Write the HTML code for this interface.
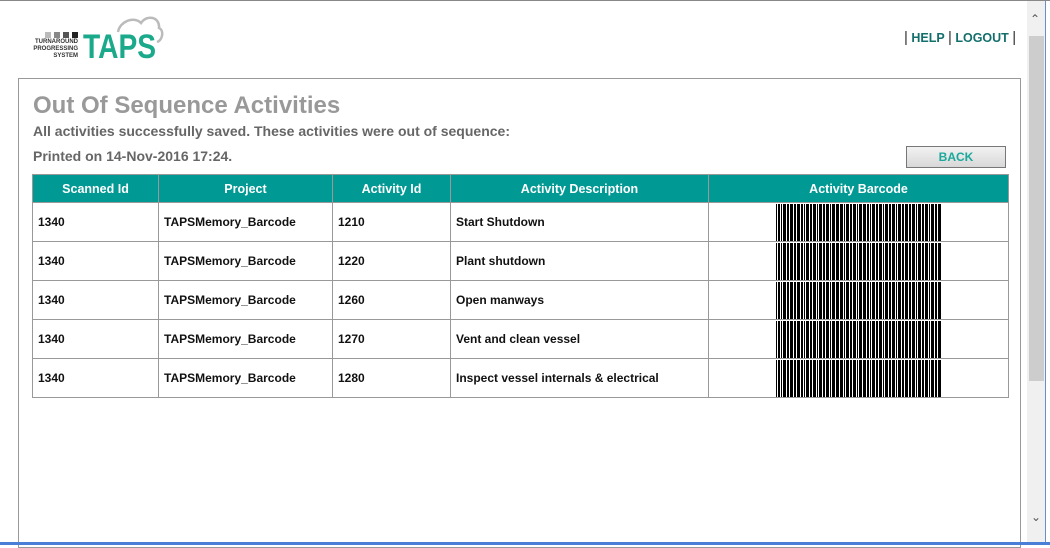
<!DOCTYPE html><html><head><style>
body{margin:0;width:1050px;height:545px;overflow:hidden;background:#fff;font-family:"Liberation Sans",Arial,sans-serif;position:relative}
.top{position:absolute;left:0;top:0;width:1050px;height:1px;background:#888}
.sb{position:absolute;left:1027px;top:1px;width:18px;height:542px;background:#f0f0f0}
.thumb{position:absolute;left:1029px;top:36px;width:15px;height:345px;background:#cdcdcd}
.rs{position:absolute;left:1045px;top:1px;width:5px;height:542px;background:#fff;border-left:1px solid #6b8ec9}
.bl{position:absolute;left:0;top:542px;width:1050px;height:3px;background:#4a7fd8}
.box{position:absolute;left:18px;top:78px;width:1003px;height:470px;border:1px solid #999;box-sizing:border-box}
h1{position:absolute;left:33px;top:92px;margin:0;font-size:24px;color:#999;font-weight:bold}
.m{position:absolute;left:33px;font-size:14px;font-weight:bold;color:#666}
.back{position:absolute;left:906px;top:146px;width:100px;height:22px;border:1px solid #777;background:linear-gradient(#f2f2f2,#d8d8d8);color:#1aa99a;font-weight:bold;font-size:12px;text-align:center;line-height:20px;box-sizing:border-box}
table{position:absolute;left:32px;top:174px;border-collapse:collapse;width:977px;font-size:12px;font-weight:bold}
th{background:#009994;color:#fff;height:28px;padding:0;border:1px solid #999;font-size:12.5px;box-sizing:border-box}
td{height:39px;border:1px solid #999;padding:0 0 0 5px;color:#111;box-sizing:border-box}
td.bc{padding:0}
td.bc svg{display:block;margin:0 auto}
.nav{position:absolute;left:904px;top:29px;font-size:12.5px;font-weight:bold;color:#136f6c}
.nav span{color:#333;font-weight:normal;font-size:15px}
</style></head><body>
<div class="top"></div>
<svg style="position:absolute;left:20px;top:12px" width="145" height="50">
<path d="M98 20 C100 9 114 4 121 11 C127 2 140 5 139 16 C144 18 143 28 137 30" fill="none" stroke="#bbb" stroke-width="2.5"/>
<rect x="25" y="20" width="6" height="6" fill="#bbb"/><rect x="34" y="20" width="6" height="6" fill="#888"/><rect x="43" y="20" width="6" height="6" fill="#555"/><rect x="52" y="20" width="6" height="6" fill="#222"/>
<text x="58" y="31" font-size="6" font-weight="bold" text-anchor="end" fill="#333" font-family="Liberation Sans">TURNAROUND</text>
<text x="58" y="38" font-size="6" font-weight="bold" text-anchor="end" fill="#333" font-family="Liberation Sans">PROGRESSING</text>
<text x="58" y="45" font-size="6" font-weight="bold" text-anchor="end" fill="#333" font-family="Liberation Sans">SYSTEM</text>
<text x="63" y="46" font-size="34" font-weight="bold" fill="#1aa98a" font-family="Liberation Sans" textLength="73" lengthAdjust="spacingAndGlyphs">TAPS</text>
</svg>
<div class="nav"><span>|</span> HELP <span>|</span> LOGOUT <span>|</span></div>
<div class="box"></div>
<h1>Out Of Sequence Activities</h1>
<div class="m" style="top:123px">All activities successfully saved. These activities were out of sequence:</div>
<div class="m" style="top:148px">Printed on 14-Nov-2016 17:24.</div>
<div class="back">BACK</div>
<table>
<tr><th style="width:126px">Scanned Id</th><th style="width:174px">Project</th><th style="width:118px">Activity Id</th><th style="width:258px">Activity Description</th><th>Activity Barcode</th></tr>
<tr><td>1340</td><td>TAPSMemory_Barcode</td><td>1210</td><td>Start Shutdown</td><td class="bc"><svg width="165" height="37"><use href="#b"/></svg></td></tr>
<tr><td>1340</td><td>TAPSMemory_Barcode</td><td>1220</td><td>Plant shutdown</td><td class="bc"><svg width="165" height="37"><use href="#b"/></svg></td></tr>
<tr><td>1340</td><td>TAPSMemory_Barcode</td><td>1260</td><td>Open manways</td><td class="bc"><svg width="165" height="37"><use href="#b"/></svg></td></tr>
<tr><td>1340</td><td>TAPSMemory_Barcode</td><td>1270</td><td>Vent and clean vessel</td><td class="bc"><svg width="165" height="37"><use href="#b"/></svg></td></tr>
<tr><td>1340</td><td>TAPSMemory_Barcode</td><td>1280</td><td>Inspect vessel internals &amp; electrical</td><td class="bc"><svg width="165" height="37"><use href="#b"/></svg></td></tr>
</table>
<svg width="0" height="0" style="position:absolute"><defs><g id="b">
<g fill="#000">
<rect x="0" width="1" height="37"/><rect x="2" width="2" height="37"/><rect x="5" width="1" height="37"/><rect x="7" width="3" height="37"/><rect x="11" width="2" height="37"/><rect x="14" width="3" height="37"/><rect x="18" width="2" height="37"/><rect x="21" width="3" height="37"/><rect x="25" width="2" height="37"/><rect x="28" width="1" height="37"/><rect x="30" width="3" height="37"/><rect x="34" width="2" height="37"/><rect x="37" width="3" height="37"/><rect x="41" width="1" height="37"/><rect x="43" width="3" height="37"/><rect x="47" width="2" height="37"/><rect x="50" width="3" height="37"/><rect x="54" width="1" height="37"/><rect x="56" width="3" height="37"/><rect x="60" width="3" height="37"/><rect x="64" width="3" height="37"/><rect x="68" width="1" height="37"/><rect x="70" width="3" height="37"/><rect x="74" width="2" height="37"/><rect x="77" width="3" height="37"/><rect x="81" width="1" height="37"/><rect x="83" width="3" height="37"/><rect x="87" width="3" height="37"/><rect x="91" width="2" height="37"/><rect x="94" width="1" height="37"/><rect x="96" width="3" height="37"/><rect x="100" width="2" height="37"/><rect x="103" width="3" height="37"/><rect x="107" width="1" height="37"/><rect x="109" width="3" height="37"/><rect x="113" width="2" height="37"/><rect x="116" width="3" height="37"/><rect x="120" width="1" height="37"/><rect x="122" width="3" height="37"/><rect x="126" width="2" height="37"/><rect x="129" width="3" height="37"/><rect x="133" width="2" height="37"/><rect x="136" width="3" height="37"/><rect x="140" width="1" height="37"/><rect x="142" width="3" height="37"/><rect x="146" width="2" height="37"/><rect x="149" width="3" height="37"/><rect x="153" width="1" height="37"/><rect x="155" width="3" height="37"/><rect x="159" width="2" height="37"/><rect x="162" width="3" height="37"/>
</g>
</g></defs></svg>
<div class="sb"></div><div class="thumb"></div>
<div style="position:absolute;left:1030px;top:12px;font-size:12px;color:#555">&#8963;</div>
<div style="position:absolute;left:1031px;top:510px;font-size:12px;color:#555">&#8964;</div>
<div class="rs"></div>
<div class="bl"></div>
</body></html>
